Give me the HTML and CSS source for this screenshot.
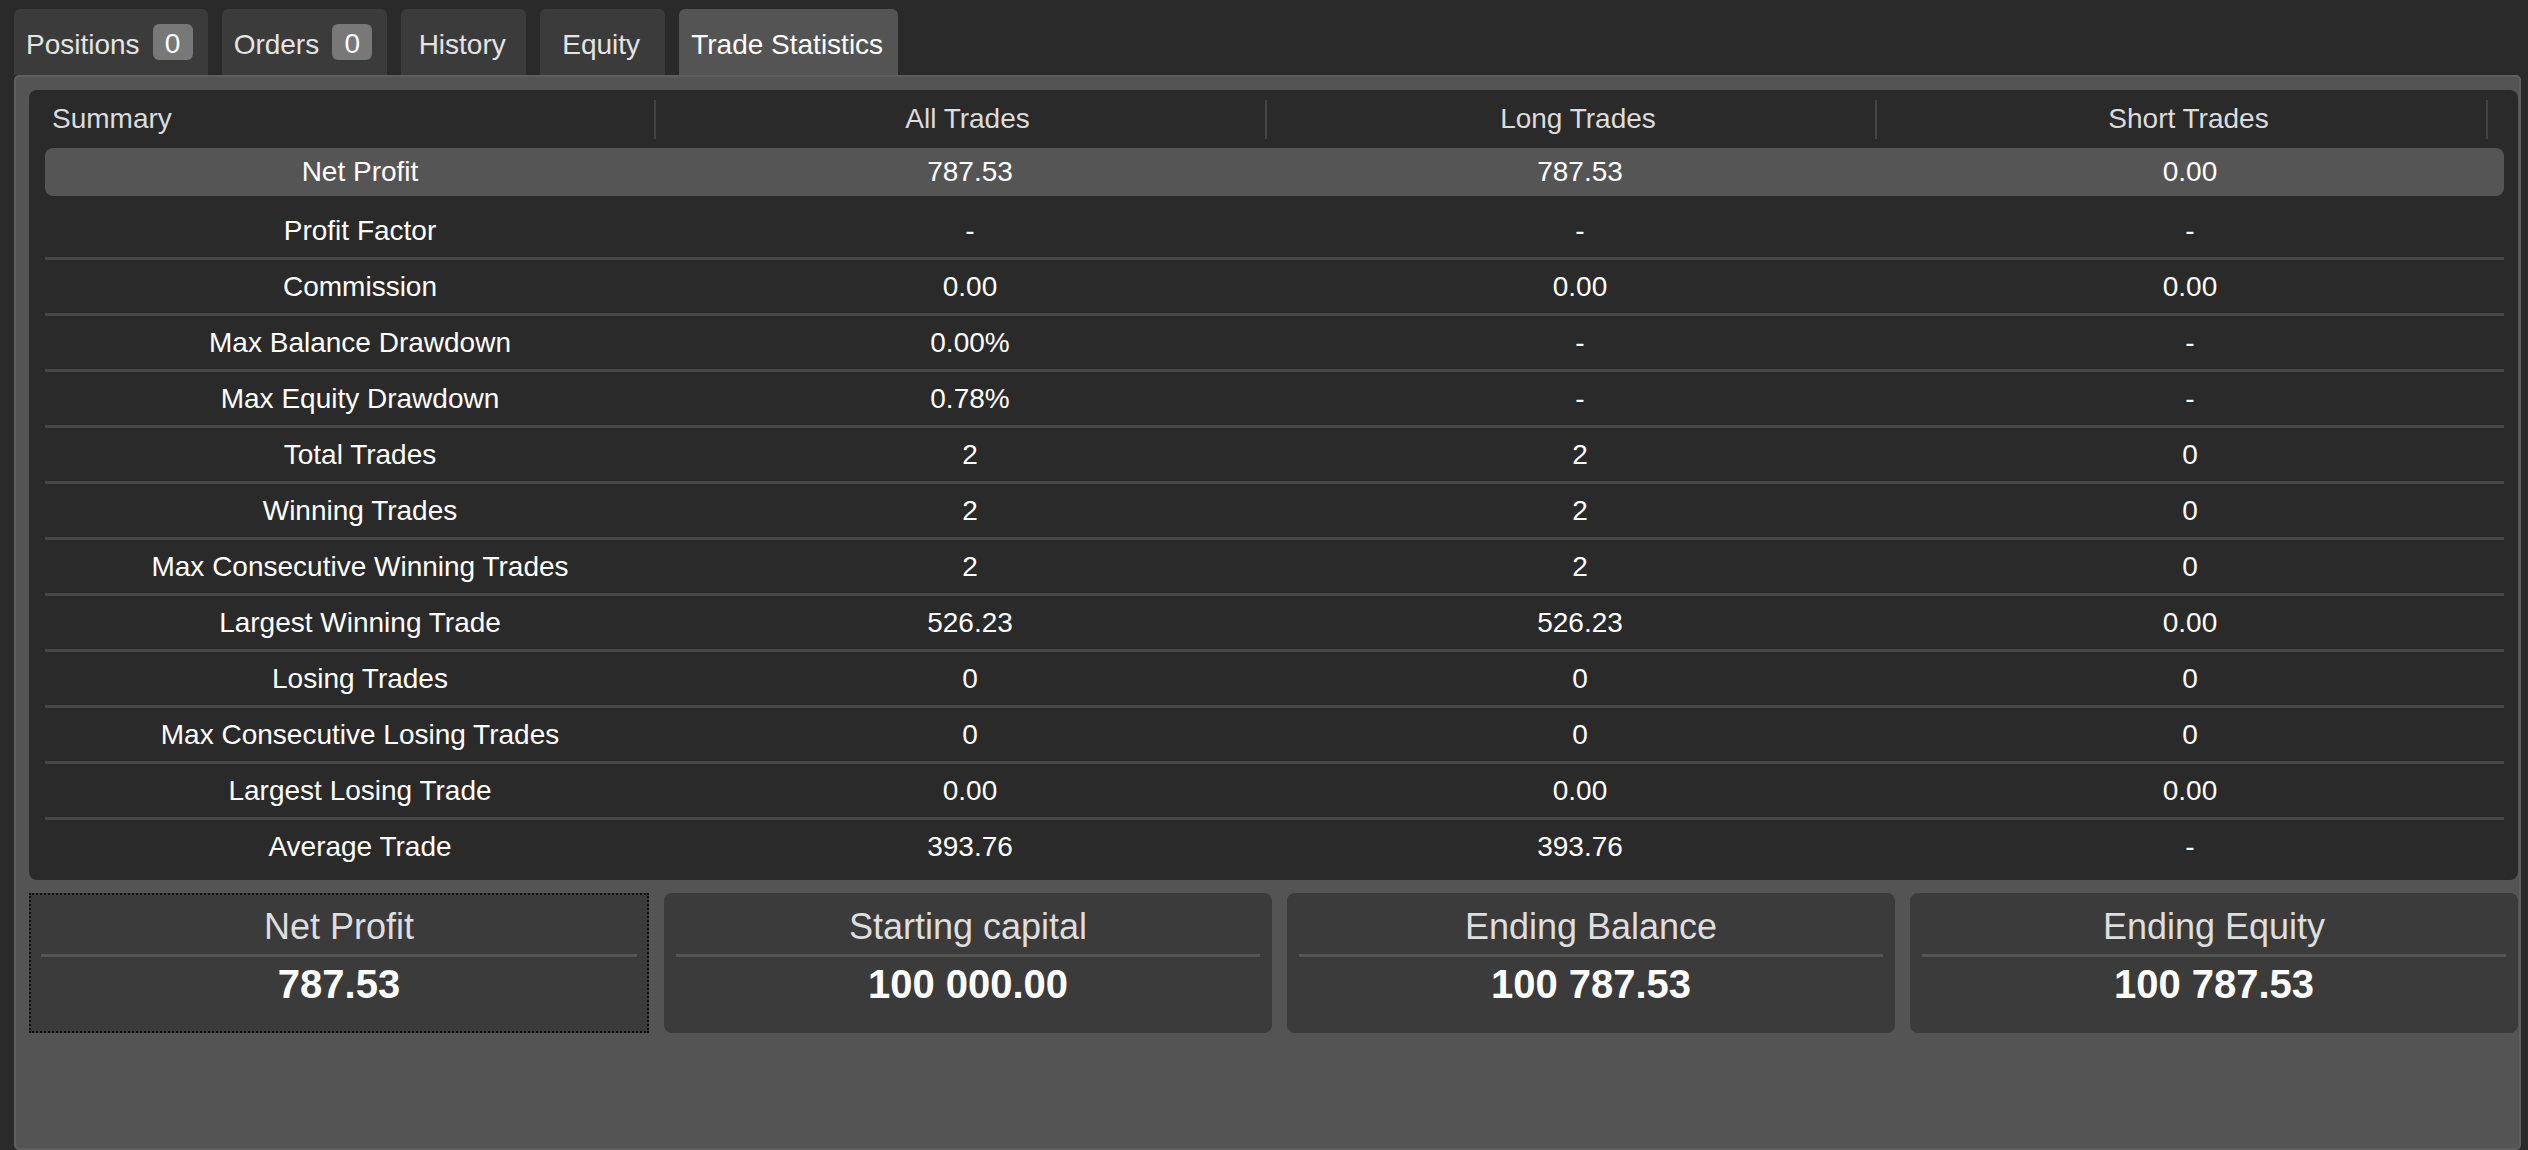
FILE: index.html
```html
<!DOCTYPE html>
<html lang="en">
<head>
<meta charset="utf-8">
<title>Trade Statistics</title>
<link rel="stylesheet" href="styles.css">
</head>
<body>
<div class="tabs">
  <div class="tab"><span class="label">Positions</span><span class="badge">0</span></div>
  <div class="tab"><span class="label">Orders</span><span class="badge">0</span></div>
  <div class="tab"><span class="label">History</span></div>
  <div class="tab"><span class="label">Equity</span></div>
  <div class="tab active"><span class="label">Trade Statistics</span></div>
</div>
<div class="panel">
  <div class="stats">
    <div class="head">
      <div class="hcell first">Summary</div>
      <div class="hcell">All Trades</div>
      <div class="hcell">Long Trades</div>
      <div class="hcell">Short Trades</div>
    </div>
    <div class="row selected"><div>Net Profit</div><div>787.53</div><div>787.53</div><div>0.00</div></div>
    <div class="row"><div>Profit Factor</div><div>-</div><div>-</div><div>-</div></div>
    <div class="row"><div>Commission</div><div>0.00</div><div>0.00</div><div>0.00</div></div>
    <div class="row"><div>Max Balance Drawdown</div><div>0.00%</div><div>-</div><div>-</div></div>
    <div class="row"><div>Max Equity Drawdown</div><div>0.78%</div><div>-</div><div>-</div></div>
    <div class="row"><div>Total Trades</div><div>2</div><div>2</div><div>0</div></div>
    <div class="row"><div>Winning Trades</div><div>2</div><div>2</div><div>0</div></div>
    <div class="row"><div>Max Consecutive Winning Trades</div><div>2</div><div>2</div><div>0</div></div>
    <div class="row"><div>Largest Winning Trade</div><div>526.23</div><div>526.23</div><div>0.00</div></div>
    <div class="row"><div>Losing Trades</div><div>0</div><div>0</div><div>0</div></div>
    <div class="row"><div>Max Consecutive Losing Trades</div><div>0</div><div>0</div><div>0</div></div>
    <div class="row"><div>Largest Losing Trade</div><div>0.00</div><div>0.00</div><div>0.00</div></div>
    <div class="row last"><div>Average Trade</div><div>393.76</div><div>393.76</div><div>-</div></div>
  </div>
  <div class="cards">
    <div class="card focused"><div class="card-title">Net Profit</div><div class="card-value">787.53</div></div>
    <div class="card"><div class="card-title">Starting capital</div><div class="card-value">100 000.00</div></div>
    <div class="card"><div class="card-title">Ending Balance</div><div class="card-value">100 787.53</div></div>
    <div class="card"><div class="card-title">Ending Equity</div><div class="card-value">100 787.53</div></div>
  </div>
</div>
</body>
</html>
```

FILE: styles.css
```css
html, body {
  margin: 0;
  padding: 0;
  background: #2a2a2a;
  font-family: "Liberation Sans", Arial, sans-serif;
}

body {
  width: 2528px;
  height: 1150px;
  overflow: hidden;
}

.tabs {
  display: flex;
  gap: 14px;
  padding: 9px 0 0 14px;
  height: 66px;
}

.tab {
  display: flex;
  align-items: center;
  justify-content: center;
  gap: 13px;
  min-width: 125px;
  height: 66px;
  box-sizing: border-box;
  padding: 0 15px 0 12px;
  background: #3b3b3b;
  border-radius: 6px 6px 0 0;
  color: #e4e4e4;
  font-size: 28px;
}

.tab.active {
  background: #545454;
  color: #ffffff;
}

.label {
  padding-top: 5px;
  line-height: 32px;
}

.badge {
  display: flex;
  align-items: center;
  justify-content: center;
  width: 40px;
  height: 36px;
  box-sizing: border-box;
  padding-top: 3px;
  border-radius: 6px;
  background: #787878;
  color: #ffffff;
  line-height: 32px;
}

.panel {
  margin: 0 7px 0 14px;
  height: 1075px;
  box-sizing: border-box;
  border: 2px solid #5e5e5e;
  border-radius: 5px;
  background: #545454;
  padding: 13px 1px 0 13px;
}

.stats {
  background: #2a2a2a;
  border-radius: 8px;
  padding: 0 14px 7px 16px;
}

.head {
  display: grid;
  grid-template-columns: 611px 611px 610px 611px;
  height: 58px;
  align-items: center;
  color: #dcdcdc;
  font-size: 28px;
}

.hcell {
  display: flex;
  align-items: center;
  justify-content: center;
  height: 39px;
  box-sizing: border-box;
  padding-left: 14px;
  border-right: 2px solid #444444;
}

.hcell.first {
  justify-content: flex-start;
  padding-left: 7px;
}

.row {
  display: grid;
  grid-template-columns: repeat(4, 1fr);
  align-items: center;
  height: 56px;
  box-sizing: border-box;
  padding: 0 9px 0 10px;
  border-bottom: 3px solid #484848;
  text-align: center;
  color: #ffffff;
  font-size: 28px;
}

.row.selected {
  height: 48px;
  margin-bottom: 8px;
  border-bottom: 0;
  border-radius: 8px;
  background: #555555;
}

.row.last {
  height: 53px;
  border-bottom: 0;
}

.cards {
  display: grid;
  grid-template-columns: 620px 1fr 1fr 1fr;
  gap: 15px;
  margin-top: 13px;
}

.card {
  height: 140px;
  box-sizing: border-box;
  padding: 14px 12px 0;
  background: #3b3b3b;
  border-radius: 8px;
  text-align: center;
}

.card.focused {
  border: 2px dotted #0c0c0c;
  border-radius: 0;
  padding: 12px 10px 0;
}

.card-title {
  font-size: 36px;
  line-height: 40px;
  color: #dedede;
  padding-bottom: 7px;
  border-bottom: 3px solid #555555;
}

.card-value {
  margin-top: 5px;
  font-size: 40px;
  line-height: 44px;
  font-weight: bold;
  color: #ffffff;
}
```
